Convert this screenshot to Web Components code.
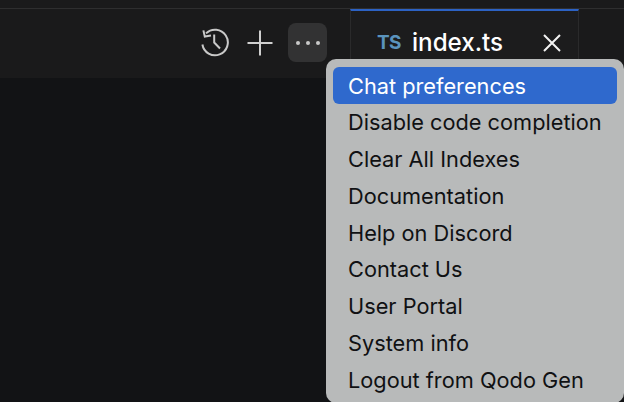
<!DOCTYPE html>
<html>
<head>
<meta charset="utf-8">
<style>
    html, body { margin: 0; height: 100%; background: #121315; overflow: hidden; }
</style>
</head>
<body>
<editor-shell>
    <menu-item active>Chat preferences</menu-item>
    <menu-item>Disable code completion</menu-item>
    <menu-item>Clear All Indexes</menu-item>
    <menu-item>Documentation</menu-item>
    <menu-item>Help on Discord</menu-item>
    <menu-item>Contact Us</menu-item>
    <menu-item>User Portal</menu-item>
    <menu-item>System info</menu-item>
    <menu-item>Logout from Qodo Gen</menu-item>
</editor-shell>
<script>
class MenuItem extends HTMLElement {
    constructor() {
        super()
        this.shadow = this.attachShadow({ mode: 'open' })
    }
    connectedCallback() {
        this.shadow.innerHTML = /*html*/`
        <style>
            :host {
                display: flex;
                align-items: center;
                height: 36.75px;
                padding-left: 15px;
                border-radius: 6px;
                color: #101113;
                white-space: nowrap;
            }
            :host([active]) {
                height: 37px;
                background: #2f69cd;
                color: #fff;
            }
        </style>
        <slot></slot>
        `
    }
}

class EditorTab extends HTMLElement {
    constructor() {
        super()
        this.shadow = this.attachShadow({ mode: 'open' })
    }
    connectedCallback() {
        this.shadow.innerHTML = /*html*/`
        <style>
            :host {
                display: flex;
                align-items: flex-start;
                box-sizing: border-box;
                width: 229px;
                height: 100%;
                padding: 18px 15px 0 26px;
                background: #1c1c1d;
                border-top: 2px solid #2c62c4;
                border-left: 1px solid #2a2a2b;
                border-right: 1px solid #2a2a2b;
            }
            .lang { color: #5a93bd; font: 700 19px/28px "Inter", sans-serif; letter-spacing: -0.6px; width: 35px; }
            .name { color: #fff; font: 500 24.2px/28px "Inter", sans-serif; flex: 1; }
            svg { display: block; margin-top: 3px; }
        </style>
        <span class="lang">TS</span>
        <span class="name">index.ts</span>
        <svg width="22" height="22" viewBox="0 0 22 22"><path d="M3 3 19 19M19 3 3 19" stroke="#f2f2f2" stroke-width="2" fill="none"/></svg>
        `
    }
}

class ToolBar extends HTMLElement {
    constructor() {
        super()
        this.shadow = this.attachShadow({ mode: 'open' })
    }
    connectedCallback() {
        this.shadow.innerHTML = /*html*/`
        <style>
            :host {
                display: flex;
                justify-content: flex-end;
                height: 69px;
                padding-right: 45px;
                background: #1a1a1b;
            }
            .actions { display: flex; align-items: flex-start; gap: 7px; padding-top: 14px; margin-right: 23px; }
            .btn { width: 38px; height: 39px; display: flex; align-items: center; justify-content: center; border-radius: 8px; }
            .more { width: 39px; background: #323233; margin-left: 2px; }
        </style>
        <div class="actions">
            <div class="btn history">
                <svg width="30" height="30" viewBox="0 0 30 30" fill="none" stroke="#c9c9c9" stroke-width="2">
                    <path d="M6 5.4A12.8 12.8 0 1 1 2.4 16.5"/>
                    <path d="M3.4 2.4 4.8 8.6 11 7.6"/>
                    <path d="M14.2 6.5v8l5.8 6"/>
                </svg>
            </div>
            <div class="btn plus">
                <svg width="28" height="28" viewBox="0 0 28 28" fill="none" stroke="#d0d0d0" stroke-width="2"><path d="M14 1.5v25M1.5 14h25"/></svg>
            </div>
            <div class="btn more">
                <svg width="26" height="6" viewBox="0 0 26 6" fill="#c9c9c9"><circle cx="3" cy="3" r="2"/><circle cx="13" cy="3" r="2"/><circle cx="23" cy="3" r="2"/></svg>
            </div>
        </div>
        <editor-tab></editor-tab>
        `
    }
}

class EditorShell extends HTMLElement {
    constructor() {
        super()
        this.shadow = this.attachShadow({ mode: 'open' })
    }
    connectedCallback() {
        this.shadow.innerHTML = /*html*/`
        <style>
            :host {
                display: flex;
                flex-direction: column;
                position: relative;
                height: 100vh;
                overflow: hidden;
                font-family: "Inter", "Liberation Sans", sans-serif;
            }
            .strip { height: 8px; background: #1a1a1b; border-bottom: 1px solid #2e2e2f; }
            .editor { flex: 1; background: #121315; }
            .menu {
                position: absolute;
                left: 326px;
                top: 59px;
                width: 298px;
                height: 344px;
                box-sizing: border-box;
                padding: 8px 7px;
                border-radius: 10px;
                background: #b8baba;
                font-size: 21.75px;
                font-weight: 400;
            }
        </style>
        <div class="strip"></div>
        <tool-bar></tool-bar>
        <div class="editor"></div>
        <div class="menu"><slot></slot></div>
        `
    }
}

customElements.define('menu-item', MenuItem);
customElements.define('editor-tab', EditorTab);
customElements.define('tool-bar', ToolBar);
customElements.define('editor-shell', EditorShell);
</script>
</body>
</html>
